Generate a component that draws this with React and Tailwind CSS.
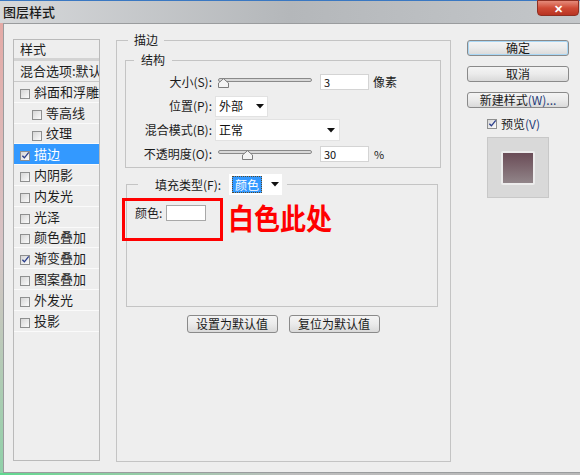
import React from "react";

function Cb({ checked }) {
  return (
    <span className="relative inline-flex w-[10px] h-[10px] shrink-0 border border-[#8e8f8f] bg-gradient-to-br from-[#d6d6d6] to-[#fbfbfb]">
      {checked && (
        <svg viewBox="0 0 10 10" className="absolute left-[0px] top-[-1px] w-[9px] h-[9px]">
          <path d="M1.5 5.2 L3.8 7.6 L8.6 1.6" fill="none" stroke="#2b3f8c" strokeWidth="1.5" />
        </svg>
      )}
    </span>
  );
}

function Arrow() {
  return (
    <svg viewBox="0 0 8 5" className="w-[8px] h-[5px] shrink-0">
      <path d="M0 0 L8 0 L4 4.5 Z" fill="#111" />
    </svg>
  );
}

function Slider({ pos }) {
  return (
    <div className="relative w-[94px] h-[16px] ml-[6px]">
      <div className="mt-[4px] h-[4px] rounded-full border border-[#8a8a8a] bg-[#d9d9d9]" />
      <svg viewBox="0 0 11 10" className="absolute top-[4px] w-[11px] h-[10px]" style={{ left: pos }}>
        <path d="M0.5 9.5 L0.5 5 L5.5 0.7 L10.5 5 L10.5 9.5 Z" fill="#f4f4f4" stroke="#7d7d7d" strokeWidth="1" />
      </svg>
    </div>
  );
}

function Row({ label, children }) {
  return (
    <div className="flex items-center h-[24px]">
      <div className="w-[86px] text-right text-[12px] leading-[16px] text-[#1b1b1b]">{label}</div>
      {children}
    </div>
  );
}

function ListItem({ label, checked, sub, selected }) {
  return (
    <div
      className={
        "flex items-center h-[20.8px] border-b border-[#fafafa] " +
        (selected ? "bg-[#3399ff] text-white" : "text-[#1e1e1e]")
      }
    >
      <div className={sub ? "ml-[18px]" : "ml-[6px]"}>
        <Cb checked={checked} />
      </div>
      <span className="ml-[4px] text-[13px] leading-[16px] whitespace-nowrap">{label}</span>
    </div>
  );
}

function Btn({ children, className = "" }) {
  return (
    <div
      className={
        "flex items-center justify-center rounded-[3px] border border-[#8a8a8a] bg-gradient-to-b from-[#f4f4f4] via-[#ebebeb] to-[#d9d9d9] text-[12px] leading-[14px] text-[#1a1a1a] " +
        className
      }
    >
      {children}
    </div>
  );
}

export default function App() {
  return (
    <div className="relative w-[580px] h-[475px] overflow-hidden flex flex-col bg-[#c3c6c9] font-['Noto_Sans_CJK_SC','Microsoft_YaHei',sans-serif]">
      {/* title bar */}
      <div className="relative h-[23px] shrink-0 border-t border-[#3a78c2] bg-gradient-to-r from-[#d6d8da] via-[#b4b7ba] to-[#c4c7ca] flex items-center">
        <span className="ml-[3px] text-[13px] leading-[16px] text-[#1a1a1a] font-medium">图层样式</span>
        <div className="absolute right-[1px] top-[-1px] w-[42px] h-[16px] rounded-b-[4px] border border-[#8e2f22] bg-gradient-to-b from-[#e58a7a] via-[#cf4a35] to-[#b83322] flex items-center justify-center">
          <span className="text-white text-[11px] font-bold leading-[11px]">✕</span>
        </div>
      </div>

      <div className="flex h-[450px] shrink-0">
        <div className="w-[3px] bg-gradient-to-b from-[#e4aaa6] via-[#d7c4c6] to-[#8fd0a8]" />
        {/* dialog body */}
        <div className="flex-1 flex items-start bg-[#eeeeee] border-l border-t border-b border-[#9a9c9e]">
          {/* style list */}
          <div className="ml-[9px] mt-[15px] w-[87px] h-[422px] border border-[#bababa] overflow-hidden">
            <div className="h-[21px] flex items-center border-b-[3px] border-[#d3d3d3] pl-[6px] text-[13px] leading-[16px] text-[#1e1e1e]">样式</div>
            <div className="h-[21px] flex items-center border-b border-[#c9c9c9] pl-[6px] text-[13px] leading-[16px] text-[#1e1e1e] whitespace-nowrap">混合选项:默认</div>
            <ListItem label="斜面和浮雕" />
            <ListItem label="等高线" sub />
            <ListItem label="纹理" sub />
            <ListItem label="描边" checked selected />
            <ListItem label="内阴影" />
            <ListItem label="内发光" />
            <ListItem label="光泽" />
            <ListItem label="颜色叠加" />
            <ListItem label="渐变叠加" checked />
            <ListItem label="图案叠加" />
            <ListItem label="外发光" />
            <ListItem label="投影" />
          </div>

          {/* main fieldset */}
          <fieldset className="ml-[16px] mt-[8px] w-[335px] h-[430px] border border-[#c4c4c4] pl-[8px] pr-[9px] flex flex-col">
            <legend className="ml-[3px] px-[6px] text-[12px] leading-[16px] text-[#1a1a1a]">描边</legend>

            <fieldset className="mt-[4px] w-[316px] border border-[#c4c4c4] pt-[2px] pb-[1px]">
              <legend className="ml-[8px] px-[7px] text-[12px] leading-[16px] text-[#1a1a1a]">结构</legend>
              <Row label="大小(S):">
                <Slider pos="0px" />
                <div className="ml-[8px] w-[49px] h-[16px] bg-white border border-[#d4d4d4] text-[11px] leading-[14px] pl-[3px] text-[#111]">3</div>
                <span className="ml-[4px] text-[12px] leading-[16px] text-[#1a1a1a]">像素</span>
              </Row>
              <Row label="位置(P):">
                <div className="ml-[3px] w-[53px] h-[21px] bg-white border border-[#e2e2e2] flex items-center pl-[3px] pr-[3px] justify-between">
                  <span className="text-[12px] leading-[16px] text-[#111]">外部</span>
                  <Arrow />
                </div>
              </Row>
              <Row label="混合模式(B):">
                <div className="ml-[3px] w-[125px] h-[22px] bg-white border border-[#e2e2e2] flex items-center pl-[3px] pr-[4px] justify-between">
                  <span className="text-[12px] leading-[16px] text-[#111]">正常</span>
                  <Arrow />
                </div>
              </Row>
              <Row label="不透明度(O):">
                <Slider pos="24px" />
                <div className="ml-[8px] w-[49px] h-[16px] bg-white border border-[#d4d4d4] text-[11px] leading-[14px] pl-[3px] text-[#111]">30</div>
                <span className="ml-[5px] text-[11px] leading-[16px] text-[#1a1a1a]">%</span>
              </Row>
            </fieldset>

            <fieldset className="mt-[6px] ml-[1px] w-[312px] h-[133px] border border-[#c4c4c4]">
              <legend className="ml-[11px] pl-[17px] pr-[5px] flex items-center h-[21px]">
                <span className="text-[12px] leading-[16px] text-[#1a1a1a]">填充类型(F):</span>
                <div className="ml-[8px] w-[53px] h-[21px] bg-white flex items-center pl-[3px] pr-[3px] justify-between">
                  <span className="px-[2px] border border-dotted border-[#5a4a2a] bg-[#3399ff] text-white text-[12px] leading-[15px]">颜色</span>
                  <Arrow />
                </div>
              </legend>
              <div className="flex items-center mt-[10px] ml-[8px]">
                <span className="text-[12px] leading-[16px] text-[#1a1a1a]">颜色:</span>
                <div className="ml-[4px] w-[40px] h-[16px] bg-white border border-[#a8a8a8]" />
              </div>
            </fieldset>

            <div className="mt-[8px] flex justify-center gap-[11px]">
              <Btn className="w-[91px] h-[18px]">设置为默认值</Btn>
              <Btn className="w-[91px] h-[18px]">复位为默认值</Btn>
            </div>
          </fieldset>

          {/* right column */}
          <div className="ml-[16px] mt-[16px] w-[102px] flex flex-col">
            <Btn className="h-[16px] border-[#3c8fd2] shadow-[inset_0_0_0_1px_#a9d7f5]">确定</Btn>
            <Btn className="h-[16px] mt-[10px]">取消</Btn>
            <Btn className="h-[16px] mt-[10px]">
              新建样式<span className="text-[#243a78]">(W)...</span>
            </Btn>
            <div className="mt-[9px] ml-[20px] h-[14px] flex items-center">
              <Cb checked />
              <span className="ml-[4px] text-[12px] leading-[16px] text-[#1a1a1a]">
                预览<span className="text-[#243a78]">(V)</span>
              </span>
            </div>
            <div className="mt-[6px] ml-[20px] w-[62px] h-[61px] bg-[#d9d9d9] border border-[#c8c8c8] flex items-center justify-center">
              <div className="p-[2px] bg-[#ececec] rounded-[2px]">
                <div className="w-[30px] h-[30px] bg-gradient-to-b from-[#6a4c57] to-[#918589]" />
              </div>
            </div>
          </div>
        </div>
      </div>
      <div className="h-[2px] shrink-0 bg-gradient-to-r from-[#5fd88f] via-[#bdbdbd] to-[#b8b8b8]" />

      {/* annotation overlay */}
      <div className="absolute left-[122px] top-[198px] w-[101px] h-[43px] border-[3px] border-[#ff0000]" />
      <div className="absolute left-[228px] top-[199px] text-[26px] leading-[34px] font-bold text-[#ff0000] scale-y-[1.12] origin-top tracking-[0px]">白色此处</div>
    </div>
  );
}
